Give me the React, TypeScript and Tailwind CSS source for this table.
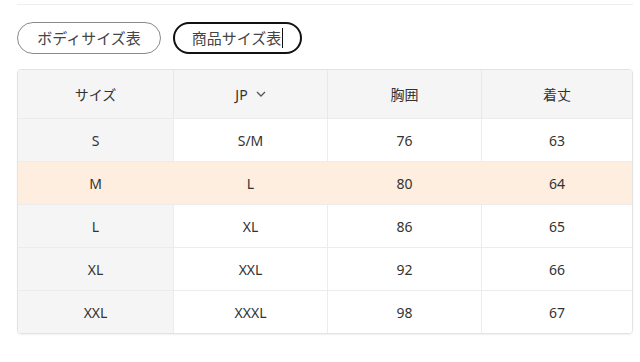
const rows = [
  ['S', 'S/M', '76', '63'],
  ['M', 'L', '80', '64'],
  ['L', 'XL', '86', '65'],
  ['XL', 'XXL', '92', '66'],
  ['XXL', 'XXXL', '98', '67'],
]

export default function App() {
  return (
    <div
      className="h-[362px] w-[640px] bg-white pl-[17px] pr-[7px] pt-1 text-[14px] text-[#333]"
      style={{ fontFamily: '"Noto Sans", "Noto Sans CJK JP", sans-serif' }}
    >
      <div className="border-t border-[#eeeeee]" />
      <div className="flex gap-3 pt-[17px] pb-[15px]">
        <button className="flex h-[32px] w-[144px] items-center justify-center rounded-full border border-[#8a8a8a] bg-white text-[15px] text-[#444]">
          ボディサイズ表
        </button>
        <button className="flex h-[32px] w-[129px] items-center justify-center rounded-full border-2 border-[#111] bg-white text-[15px] text-[#444]">
          商品サイズ表
          <span className="ml-px h-[20px] w-px bg-[#111]" />
        </button>
      </div>
      <div className="overflow-hidden rounded-[4px] border border-[#e3e3e3] shadow-[0_1px_2px_rgba(0,0,0,0.06)]">
        <div className="grid h-[48px] grid-cols-[156px_154px_154px_1fr] bg-[#f5f5f5]">
          <div className="flex items-center justify-center border-r border-[#e8e8e8]">サイズ</div>
          <div className="flex items-center justify-center gap-2 border-r border-[#e8e8e8]">
            JP
            <svg width="10" height="6" viewBox="0 0 10 6" fill="none" stroke="#555" strokeWidth="1.3">
              <path d="M1 1l4 4 4-4" />
            </svg>
          </div>
          <div className="flex items-center justify-center border-r border-[#e8e8e8]">胸囲</div>
          <div className="flex items-center justify-center">着丈</div>
        </div>
        {rows.map((r, i) => {
          const hi = i === 1
          return (
            <div
              key={r[0]}
              className={`grid h-[43px] grid-cols-[156px_154px_154px_1fr] border-t border-[#ececec] ${hi ? 'bg-[#fdeedf]' : 'bg-white'}`}
            >
              <div className={`flex items-center justify-center border-r ${hi ? 'border-[#fdeedf]' : 'border-[#ececec] bg-[#f5f5f5]'}`}>
                {r[0]}
              </div>
              <div className={`flex items-center justify-center border-r ${hi ? 'border-[#fdeedf]' : 'border-[#ececec]'}`}>
                {r[1]}
              </div>
              <div className={`flex items-center justify-center border-r ${hi ? 'border-[#fdeedf]' : 'border-[#ececec]'}`}>
                {r[2]}
              </div>
              <div className="flex items-center justify-center">{r[3]}</div>
            </div>
          )
        })}
      </div>
    </div>
  )
}
